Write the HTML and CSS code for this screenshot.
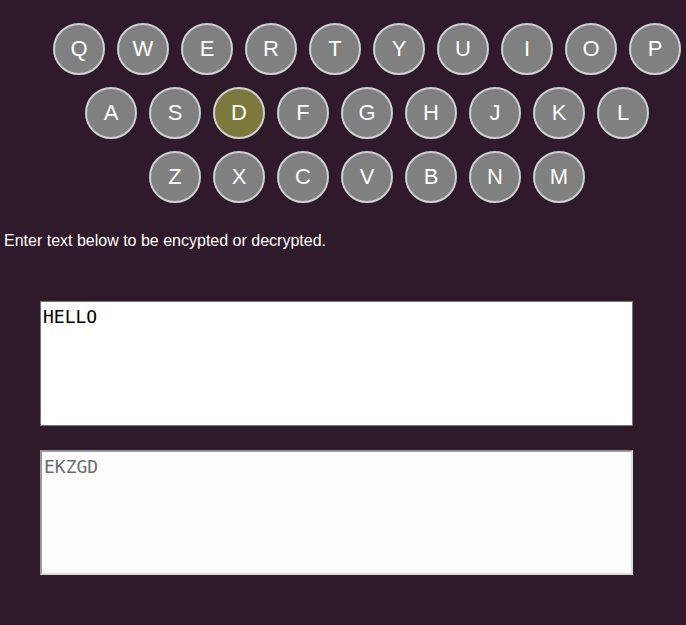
FILE: index.html
```html
<!DOCTYPE html>
<html>
<head>
<meta charset="utf-8">
<link rel="stylesheet" href="styles.css">
</head>
<body>
<div class="keyboard">
  <div class="row">
    <span class="key">Q</span><span class="key">W</span><span class="key">E</span><span class="key">R</span><span class="key">T</span><span class="key">Y</span><span class="key">U</span><span class="key">I</span><span class="key">O</span><span class="key">P</span>
  </div>
  <div class="row">
    <span class="key">A</span><span class="key">S</span><span class="key lit">D</span><span class="key">F</span><span class="key">G</span><span class="key">H</span><span class="key">J</span><span class="key">K</span><span class="key">L</span>
  </div>
  <div class="row">
    <span class="key">Z</span><span class="key">X</span><span class="key">C</span><span class="key">V</span><span class="key">B</span><span class="key">N</span><span class="key">M</span>
  </div>
</div>
<p class="intro">Enter text below to be encypted or decrypted.</p>
<div class="boxes">
  <textarea class="input">HELLO</textarea>
  <textarea class="output" disabled>EKZGD</textarea>
</div>
</body>
</html>
```
FILE: styles.css
```css
html, body {
  margin: 0;
  padding: 0;
  background: #2f1a2c;
}
body {
  font-family: "Liberation Sans", Arial, sans-serif;
  color: #fff;
}
.keyboard {
  width: 640px;
  padding-top: 17px;
  margin-left: 47px;
}
.row {
  display: flex;
  justify-content: center;
}
.key {
  box-sizing: border-box;
  flex: 0 0 52px;
  width: 52px;
  height: 52px;
  margin: 6px;
  border: 2px solid #cfcfcf;
  border-radius: 50%;
  background: #808080;
  color: #fff;
  font-size: 22px;
  display: flex;
  align-items: center;
  justify-content: center;
}
.key.lit {
  background: #7b7a3c;
}
.intro {
  margin: 23px 0 0 0;
  padding-left: 4px;
  font-size: 16px;
  line-height: 18px;
}
.boxes {
  display: flex;
  flex-direction: column;
  gap: 24px;
  margin-top: 51px;
  padding-left: 40px;
}
textarea {
  box-sizing: border-box;
  width: 593px;
  height: 125px;
  margin: 0;
  padding: 4px 2px;
  font-family: "DejaVu Sans Mono", monospace;
  font-size: 18px;
  background: #fff;
  resize: none;
  outline: none;
}
.input {
  border: 1px solid #767676;
  color: #000;
}
.output {
  border-style: solid;
  border-width: 2px;
  border-color: #9a9a9a #dcdcdc #dcdcdc #9a9a9a;
  color: #6d6d6d;
  background: #fdfdfd;
}
```
